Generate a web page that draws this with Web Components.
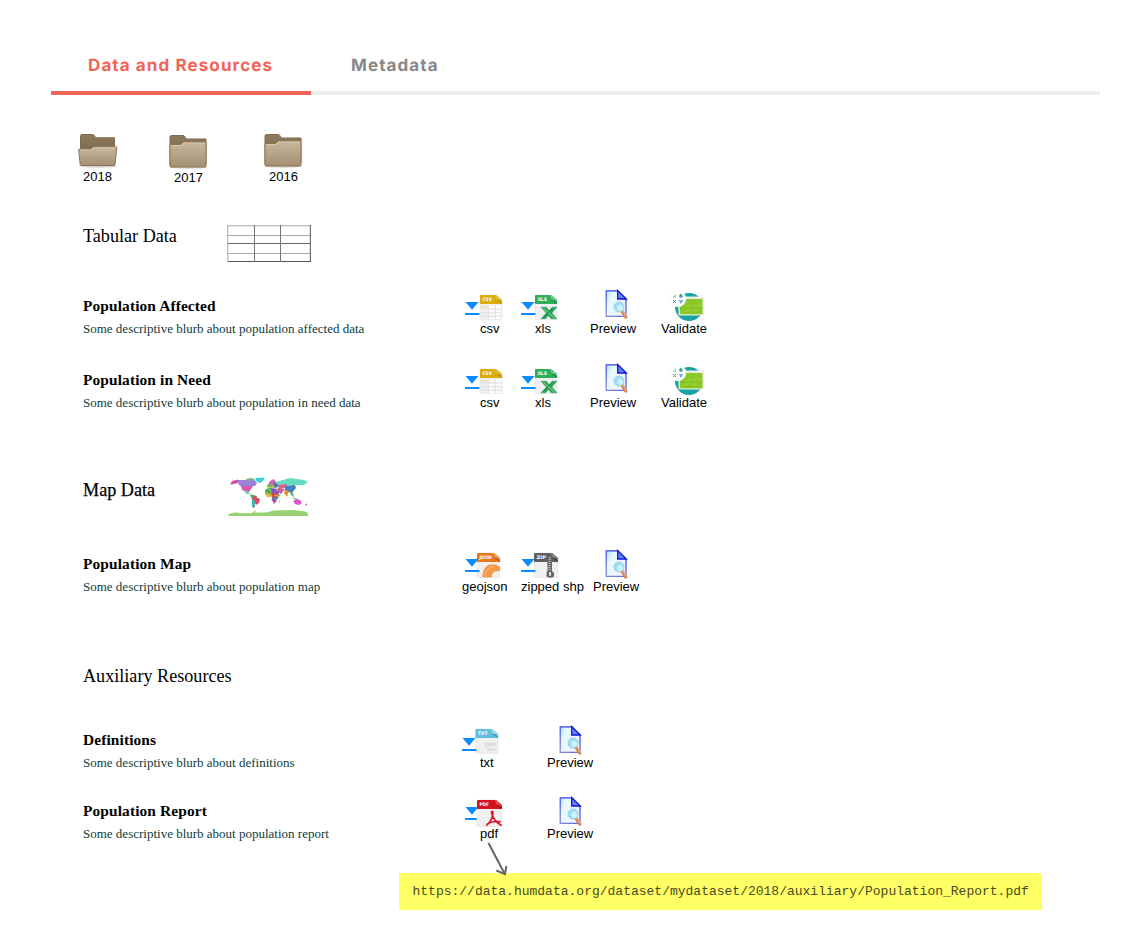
<!DOCTYPE html>
<html lang="en">
<head>
<meta charset="utf-8">
<title>Data and Resources</title>
<style>
body{margin:0;background:#fff;font-family:"Liberation Sans",Arial,sans-serif;color:#000}
</style>
</head>
<body>
<data-page></data-page>
<script>
const define=(n,html,setup)=>customElements.define(n,class extends HTMLElement{
  constructor(){super();this.attachShadow({mode:'open'}).innerHTML=html}
  connectedCallback(){if(setup)setup(this,this.shadowRoot)}
});

const sheet=(band,dark,fold,tag,inner,w=22,h=24.5)=>`
  <path d="M1 0H${w-6}L${w} 5V${h-1}Q${w} ${h} ${w-1} ${h}H1Q0 ${h} 0 ${h-1}V1Q0 0 1 0Z" fill="#f0f0f0" stroke="#dedede" stroke-width=".5"/>
  <path d="M1 0H${w-6}L${w} 5V9H0V1Q0 0 1 0Z" fill="${band}"/>
  <path d="M${w-7.5} 0H${w-6}L${w} 5V7Q${w-3} 4.2 ${w-6.5} 4.5Q${w-5} 4 ${w-7.5} 0Z" fill="${fold}"/>
  <path d="M${w-6.5} 4.5Q${w-3} 4.2 ${w} 7V9Z" fill="${dark}"/>
  <text x="2.4" y="6" font-family="DejaVu Sans,sans-serif" font-weight="700" font-size="4.7" textLength="${tag.length>3?12.3:9.6}" lengthAdjust="spacingAndGlyphs" fill="#fff">${tag}</text>${inner}`;

const ICONS={
  dl:`<path d="M.5 0H13.5L7 7.8Z" fill="#0a8cff"/><rect x="0" y="11" width="14.5" height="2" fill="#0a8cff"/>`,
  csv:sheet('#d9ae0e','#c09406','#e3bd35','CSV',`<path d="M1 10.8H8V12.8H1Z" fill="#f6dfa6"/><g fill="#fcfcfc"><path d="M8.6 10.5h6v3.1h-6zM15.4 10.5H21v3.1h-5.6zM8.6 14.6h6v2.8h-6zM15.4 14.6H21v2.8h-5.6zM8.6 18.2h6v2.6h-6zM15.4 18.2H21v2.6h-5.6zM8.6 21.6h6V24h-6zM15.4 21.6H21V24h-5.6z"/></g><path d="M1 14.1H21M1 17.8H21M1 21.2H21M8.3 10V24M15 10V24" stroke="#d4d4d4" stroke-width=".6"/>`),
  xls:sheet('#2fae5b','#198e42','#6cc68a','XLS',`<path d="M6 12.2H11.4L14.2 15.8L17.2 12.2H21.8L16.8 18L21.8 23.8H16.2L13.5 20.6L10.5 23.8H6L11.4 18Z" fill="#2aa557" stroke="#2aa557" stroke-width=".6"/><path d="M8.4 13L19.4 23" stroke="#d8efdf" stroke-width=".6"/><path d="M17.5 13L8.5 22.5" stroke="#137c39" stroke-width=".7"/>`),
  json:sheet('#e97817','#c95a08','#ee9a55','JSON',`<path d="M5.5 24.5C5 16 10 11.3 15 11.3C19 11.3 21.5 12.5 23 14V18.2C18 17 14.7 20 14.7 24.5Z" fill="#f39b4a"/><path d="M8 24.5C8 18 12 13.8 17 13.4" fill="none" stroke="#f8bd84" stroke-width="1"/>`,23),
  zip:sheet('#606060','#444','#858585','ZIP',`<path d="M13 4H18V18L20 20V23.5Q16 26 12.5 23.5V20L13.6 17Z" fill="#666"/><path d="M15.6 4V17" stroke="#c9c9c9" stroke-width="1.7" stroke-dasharray="1 1"/><rect x="15" y="19" width="2" height="4" rx="1" fill="#e6e6e6"/>`,24),
  txt:sheet('#5fbfdd','#3b9cc0','#9cd7ea','TXT',`<g font-family="Liberation Sans,Arial,sans-serif" font-size="4.8" fill="#c4c4c4"><text x="9" y="17.4" textLength="11.5">plain</text><text x="11.8" y="22" textLength="8">text</text></g>`,22.5),
  pdf:sheet('#d3131d','#9f0912','#e34b52','PDF',`<path d="M9.4 25.6C12.8 22.5 15.8 17 16 13.2C16 10.8 14.1 10.6 14.5 12.8C15.6 17.4 19.5 22.8 24.6 25.4M9.4 25.6C10.5 22.5 16 21.2 23.6 21.6" fill="none" stroke="#d51a26" stroke-width="1.7"/>`,25,26.5),
  preview:`<defs><linearGradient id="p" x1="0" x2="1" y1="0" y2=".5"><stop stop-color="#a9e2fb"/><stop offset=".3" stop-color="#e6f8ff"/><stop offset="1" stop-color="#f2f3ff"/></linearGradient><linearGradient id="b" x1="0" y1="1" x2=".6" y2="0"><stop stop-color="#8089d0"/><stop offset="1" stop-color="#2a34f2"/></linearGradient></defs>
   <path d="M.2.8H11.7L20 9V26.3H.2Z" fill="url(#p)" stroke="url(#b)" stroke-width="1.2"/><path d="M11.7.5V9H20.3Z" fill="#5f86f0" stroke="#1116d8" stroke-width="1.3"/>
   <path d="M16 21.2L19.8 27" stroke="#d98750" stroke-width="3.3" stroke-linecap="round"/><path d="M17 21.2L20.6 26.5" stroke="#f5c39a" stroke-width="1"/><circle cx="13" cy="17" r="5" fill="#a3dff2" stroke="#93cde3" stroke-width=".9"/><circle cx="14.3" cy="18" r="2.9" fill="#c8f5fb"/>`,
  validate:`<circle cx="19" cy="17" r="14" fill="#16a3a1"/><rect x="8.5" y="6.5" width="25.5" height="19" fill="#ecece6"/><rect x="10" y="9" width="22.5" height="15.3" fill="#8bc926"/>
   <path d="M16 15.5l1.5 1.5 3-3M22 15.5l1.5 1.5 3-3M28 15.5l1 1 2.5-3M15 20l1.5 1 3-2.2M23 20l1.5 1 3-2.2" fill="none" stroke="#b4dd72" stroke-width=".6"/><path d="M10 18.5H32.5M14.5 22.5H32.5" stroke="#76b120" stroke-width=".5" stroke-dasharray="2 1"/>
   <circle cx="7.8" cy="8.7" r="8.2" fill="#fff" stroke="#e7efef" stroke-width=".5"/><path d="M3 6.5L6 4V8H3Z" fill="#a5e3bd"/><path d="M9 5.8L10.8 3.6L13.2 6.4H9Z" fill="#2fa56c"/><path d="M9 6.4h4l-1.2 1.4H9.8Z" fill="#3274ce"/><path d="M3 10l3 3M6 10l-3 3" stroke="#5a8fb3" stroke-width="1"/><path d="M9 10h1.5l.5.8.6-.8H13v1l-1 .8v1.4h-2v-1.4l-1-.8Z" fill="#6aa8e6"/>`
};

define('tab-item',`<style>:host{display:flex;box-sizing:border-box;height:54px;align-items:flex-start;padding:14px 0 0 37px;width:260px;font:650 17px/22px Inter,sans-serif;letter-spacing:1.1px;color:#888;white-space:nowrap;border-bottom:4px solid #eee;text-rendering:geometricPrecision}
:host([active]){color:#f2645a;border-color:#f2645a}:host(:last-child){flex:1;padding-left:40px}</style><slot></slot>`);

define('tab-bar',`<style>:host{display:flex;margin:0 40px 0 51px}</style><slot></slot>`);

define('year-folder',`<style>:host{display:flex;flex-direction:column;width:40px;font-size:13px;line-height:15px}svg{display:block}span{padding-left:5px}</style>
<svg width="40" height="36"></svg><span><slot></slot></span>`,(h,r)=>{
  const open=h.hasAttribute('open');
  r.querySelector('svg').innerHTML=`<defs><linearGradient id="f" x2="0" y2="1"><stop stop-color="#c6b89f"/><stop offset="1" stop-color="#a39074"/></linearGradient><linearGradient id="k" x2="0" y2="1"><stop stop-color="#8d7b5f"/><stop offset="1" stop-color="#705f46"/></linearGradient></defs>
  <ellipse cx="19.5" cy="33.3" rx="18.5" ry="1.5" fill="#000" opacity=".18"/>`+(open?
  `<path d="M2.5 31V3Q2.5 1.5 4 1.5H14.5Q16 1.5 17 3.5L18 4.8H36.5V30Z" fill="url(#k)" stroke="#80694a"/>
   <path d="M.7 17Q.6 16 1.6 16H12.5L15.5 13.8H38.2Q38.9 13.8 38.7 15L37 31.6Q36.9 32.5 36 32.5H3.2Q2.4 32.5 2.2 31.6Z" fill="url(#f)" stroke="#94734a"/><path d="M2 17H13L16 14.8H37.7" fill="none" stroke="#d9cdb9" stroke-width=".8"/>`:
  `<g transform="translate(-.5 0)"><path d="M1.5 31V3Q1.5 1.5 3 1.5H14.5Q16 1.5 17 3.5L18 5H37.5V30Z" fill="url(#k)" stroke="#80694a"/>
   <path d="M1.5 11Q1.5 10.5 2 10.5H12L15 8H36.7Q37.5 8 37.5 9V32Q37.5 33 36.5 33H2.5Q1.5 33 1.5 32Z" fill="url(#f)" stroke="#94734a"/><path d="M2.5 11.5H12.5L15.5 9H36.5" fill="none" stroke="#d9cdb9" stroke-width=".8"/></g>`);
});

define('section-title',`<style>:host{display:grid;grid-template-columns:144px auto;padding-left:83px;height:42px;font:18.15px/22px "Liberation Serif",serif}span{white-space:nowrap}</style><span><slot></slot></span><slot name="art"></slot>`);

define('table-art',`<style>:host{display:block}svg{display:block}</style><svg width="85" height="38"><path d="M.5.8H83.5" stroke="#aaa"/><path d="M.5 10.5H83M.5 28.5H83" stroke="#aaa"/><path d="M.5 18.5H83" stroke="#666"/><path d="M.5 36.5H84" stroke="#555"/><path d="M.8 0V37" stroke="#aaa"/><path d="M27.5 0V37M53.5 0V37" stroke="#777"/><path d="M83.3 0V37" stroke="#555"/></svg>`);

define('world-art',`<style>:host{display:block;padding-left:1px}svg{display:block}</style><svg width="84" height="42" viewBox="0 0 84 42">
<path d="M4 4L10 2.5V6L6 7L2 7.5Z" fill="#d0559c"/><path d="M10 3L18 3L26 2L29 6L27 9H12L10 6Z" fill="#9b82d8"/><path d="M17 2L24 1L27 3L22 4Z" fill="#7ab07b"/><path d="M27 1L37 .5L35 4L32 6L29 5Z" fill="#35d2d2"/><path d="M13 9H25L23 12L21 15L14 13Z" fill="#d65aa5"/><path d="M15 13L20 15L22 17L19 17Z" fill="#52c5a0"/><path d="M22 17L25 18L29 19L28 22L25 24L23 20Z" fill="#47a66b"/><path d="M26 19L32 22L31 26L28 28L26 24L24 22Z" fill="#e04667"/><path d="M24 22L27 24L27 27L26 31L24 30Z" fill="#40b7a5"/><path d="M25 28L27 29L25 31Z" fill="#5965d8"/>
<path d="M42 4L46 2L48 5L44 8L40 8Z" fill="#c46ab6"/><path d="M38 9L41 7L47 7L48 11H40Z" fill="#9fcb59"/><path d="M45 6L50 5L51 9L47 11Z" fill="#5c62bb"/><path d="M47 5L55 3L62 1L76 3L80 5L76 8L67 8L57 9L50 8Z" fill="#65dbc0"/><path d="M50 8L58 7L60 10L52 12Z" fill="#d7648d"/><path d="M57 9L67 8L68 11L64 16L57 14Z" fill="#427fc9"/><path d="M57 13L61 14L59 20L56 16Z" fill="#d99832"/><path d="M62 15L65 16L66 20L63 18Z" fill="#4dbe62"/><path d="M63 20L70 22L68 23Z" fill="#47b16d"/>
<path d="M37 13L40 11L44 11L44 16L37 18Z" fill="#4cbe5e"/><path d="M43 11L51 12L51 18L44 17Z" fill="#8d52d8"/><path d="M37 16H43L43 20L39 20Z" fill="#d7ba37"/><path d="M43 16L51 17L50 22L44 22Z" fill="#df4545"/><path d="M44 20L49 20L48 25L44 23Z" fill="#388ccd"/><path d="M44 23L49 23L46 27Z" fill="#b448b5"/><path d="M49 17L53 18L49 21Z" fill="#66cb4a"/><path d="M50 11L57 12L53 17L50 15Z" fill="#c36697"/><path d="M51 24L52 23L51 27Z" fill="#df9641"/>
<g stroke-width=".8"><path d="M40 8l3 0M49 9l3 3M39 13l4 5M45 13l1 8" stroke="#666"/><path d="M41 12l2 2M48 12l2 2M46 18l3 1" stroke="#f0c62d"/><path d="M43 9l4-3M45 20l-1 4" stroke="#db424d"/></g>
<path d="M65 24L69 22L72 23L74 26L71 28L67 27Z" fill="#df52cc"/><path d="M77 28l2-2-.5 3" fill="#cf526b"/><path d="M.5 39V37L6 35.5L17 36.2L24 36L28 33L27 35.5L38 35.5L46 33.5L66 33L77 34.5L80 36V39Z" fill="#97d172"/>
</svg>`);

define('resource-row',`<style>:host{display:grid;grid-template-columns:379px auto;padding-left:83px;height:48px}.t{font:700 15.4px/18px "Liberation Serif",serif;letter-spacing:.12px;padding-top:8px}.d{font:13px/16px "Liberation Serif",serif;color:#0e3a3a;padding-top:6px;white-space:nowrap}.a{display:flex}</style>
<div><div class="t"><slot name="title"></slot></div><div class="d"><slot name="blurb"></slot></div></div><div class="a"><slot></slot></div>`);

define('res-action',`<style>:host{display:block;flex:none;font-size:13px;line-height:15px;white-space:nowrap}svg{display:block;overflow:visible}</style><svg width="48" height="32"></svg><div><slot></slot></div>`,(h,r)=>{
  h.style.width=h.getAttribute('w')+'px';
  r.querySelector('div').style.paddingLeft=(h.getAttribute('label-x')||0)+'px';
  r.querySelector('svg').innerHTML=h.getAttribute('icons').split(' ').map(p=>{const[n,x,y]=p.split(/[@,]/);return`<g transform="translate(${x} ${y})">${ICONS[n]}</g>`}).join('');
});

define('link-note',`<style>:host{display:block;position:relative;box-sizing:border-box;margin-left:399px;width:643px;height:37px;background:#ff6;padding:10px 13.5px;font:13px/18px "Liberation Mono",monospace;color:#4a4a1e;white-space:nowrap}
svg{position:absolute;left:85px;top:-32px}</style><svg width="26" height="36"><path d="M4.5 2L20.5 32.5M12.3 29.5L21 33.2L22.4 25" fill="none" stroke="#666" stroke-width="2"/></svg><slot></slot>`);

const row=(t,b,a)=>`<resource-row><span slot="title">${t}</span><span slot="blurb">${b}</span>${a}</resource-row>`;
const tabular=`<res-action style="margin-left:3px" w="56" label-x="15" icons="csv@15,6 dl@0,13">csv</res-action><res-action w="69" label-x="14" icons="xls@14,6 dl@0,13">xls</res-action><res-action w="71" icons="preview@16,1">Preview</res-action><res-action w="50" icons="validate@9,1">Validate</res-action>`;
define('data-page',`<style>:host{display:flex;flex-direction:column;box-sizing:border-box;height:944px;padding-top:41px;overflow:hidden}
.years{display:flex;padding-left:78px;margin-top:38px;height:54px}</style>
<tab-bar><tab-item active>Data and Resources</tab-item><tab-item>Metadata</tab-item></tab-bar>
<div class="years"><year-folder open style="margin-top:-.5px">2018</year-folder><year-folder style="margin-left:51px;margin-top:.5px">2017</year-folder><year-folder style="margin-left:55px;margin-top:-.5px">2016</year-folder></div>
<section-title style="margin-top:38px">Tabular Data<table-art slot="art"></table-art></section-title>
${row('Population Affected','Some descriptive blurb about population affected data',tabular).replace('<resource-row','<resource-row style="margin-top:22px"')}
${row('Population in Need','Some descriptive blurb about population in need data',tabular).replace('<resource-row','<resource-row style="margin-top:26px"')}
<section-title style="margin-top:68px"><span style="-webkit-text-stroke:.25px #000">Map Data</span><world-art slot="art" style="margin-top:-2px"></world-art></section-title>
${row('Population Map','Some descriptive blurb about population map','<res-action w="59" icons="json@15,6 dl@3,12">geojson</res-action><res-action w="72" icons="zip@13,6 dl@0,12">zipped shp</res-action><res-action w="50" icons="preview@13,3">Preview</res-action>').replace('<resource-row','<resource-row style="margin-top:26px"')}
<section-title style="margin-top:70px">Auxiliary Resources</section-title>
${row('Definitions','Some descriptive blurb about definitions','<res-action w="85" label-x="18" icons="txt@13.5,6 dl@0,15">txt</res-action><res-action w="50" icons="preview@13,3">Preview</res-action>').replace('<resource-row','<resource-row style="margin-top:16px"')}
${row('Population Report','Some descriptive blurb about population report','<res-action style="margin-left:3px" w="82" label-x="15" icons="dl@0,13 pdf@12,6">pdf</res-action><res-action w="50" icons="preview@13,3">Preview</res-action>').replace('<resource-row','<resource-row style="margin-top:23px"')}
<link-note style="margin-top:31px">https://data.humdata.org/dataset/mydataset/2018/auxiliary/Population_Report.pdf</link-note>`);
</script>
</body>
</html>
